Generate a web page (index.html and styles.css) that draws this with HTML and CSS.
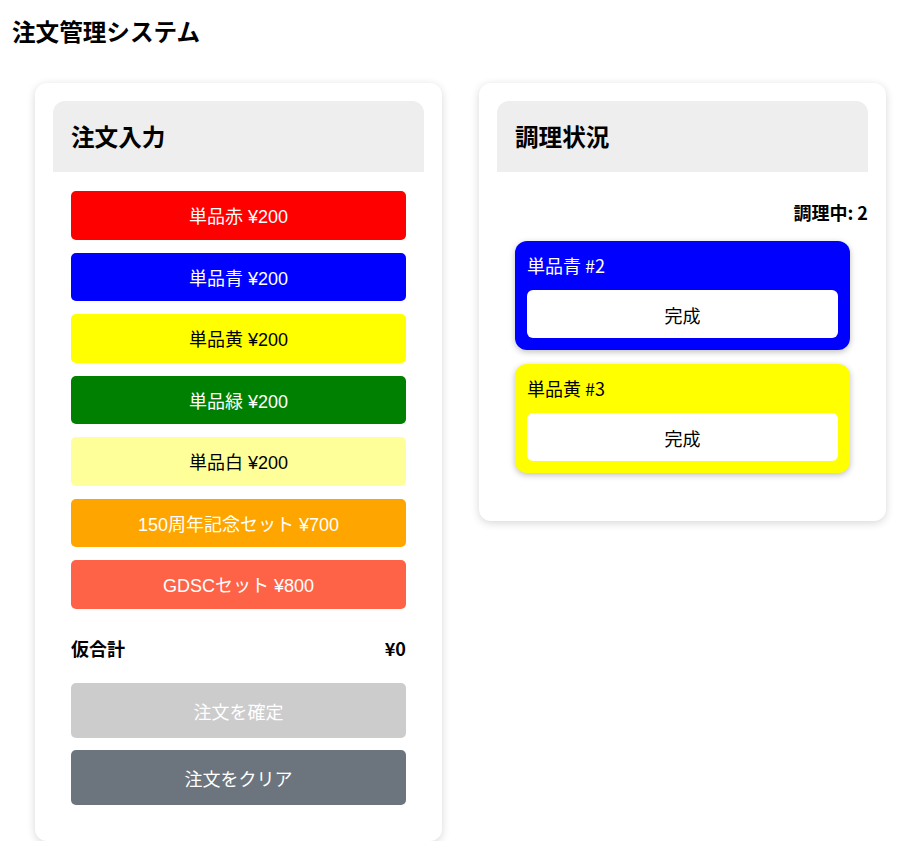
FILE: index.html
```html
<!DOCTYPE html>
<html lang="ja">
<head>
<meta charset="utf-8">
<title>注文管理システム</title>
<link rel="stylesheet" href="styles.css">
</head>
<body>
<h1 class="app-title">注文管理システム</h1>
<main class="layout">
  <section class="panel">
    <div class="panel-head"><h2>注文入力</h2></div>
    <div class="order-body">
      <div class="menu">
        <button class="item red">単品赤 ¥200</button>
        <button class="item blue">単品青 ¥200</button>
        <button class="item yellow">単品黄 ¥200</button>
        <button class="item green">単品緑 ¥200</button>
        <button class="item white">単品白 ¥200</button>
        <button class="item orange">150周年記念セット ¥700</button>
        <button class="item tomato">GDSCセット ¥800</button>
      </div>
      <div class="subtotal"><span>仮合計</span><span>¥0</span></div>
      <div class="actions">
        <button class="action confirm">注文を確定</button>
        <button class="action clear">注文をクリア</button>
      </div>
    </div>
  </section>
  <section class="panel">
    <div class="panel-head"><h2>調理状況</h2></div>
    <div class="count">調理中: 2</div>
    <div class="cook-list">
      <div class="cook blue"><div class="cook-name">単品青 #2</div><button class="done">完成</button></div>
      <div class="cook yellow"><div class="cook-name">単品黄 #3</div><button class="done">完成</button></div>
    </div>
  </section>
</main>
</body>
</html>
```
FILE: styles.css
```css
* { box-sizing: border-box; }
body {
  margin: 0;
  font-family: "Noto Sans CJK JP", "Noto Sans", sans-serif;
  color: #000;
  background: #fff;
}
.app-title {
  margin: 0;
  padding: 13px 12px 0;
  font-size: 23.6px;
  line-height: 36px;
  font-weight: 700;
}
.layout {
  display: flex;
  align-items: flex-start;
  gap: 37px;
  padding: 34px 23px 0 35px;
}
.panel {
  width: 407px;
  padding: 18px;
  background: #fff;
  border-radius: 12px;
  box-shadow: 0 2px 8px rgba(0,0,0,0.16);
}
.panel-head {
  height: 71px;
  display: flex;
  align-items: center;
  padding: 0 18px;
  background: #eeeeee;
  border-radius: 12px 12px 0 0;
}
.panel-head h2 {
  margin: 0;
  font-size: 23.6px;
  font-weight: 700;
  line-height: 1;
}
.order-body {
  padding: 19px 18px 18px;
}
.menu {
  display: flex;
  flex-direction: column;
  gap: 13px;
}
button {
  font-family: "Liberation Sans", "Noto Sans CJK JP", sans-serif;
  border: none;
  cursor: pointer;
}
.item {
  height: 48.5px;
  border-radius: 5px;
  font-size: 18px;
  color: #fff;
}
.item.red { background: #ff0000; }
.item.blue { background: #0000ff; }
.item.yellow { background: #ffff00; color: #000; }
.item.green { background: #008000; }
.item.white { background: #ffff99; color: #000; }
.item.orange { background: #ffa500; }
.item.tomato { background: #ff6347; }
.subtotal {
  display: flex;
  justify-content: space-between;
  margin: 26px 0 21.5px;
  font-size: 18px;
  font-weight: 700;
  line-height: 27px;
}
.actions {
  display: flex;
  flex-direction: column;
  gap: 12px;
}
.action {
  height: 55px;
  border-radius: 5px;
  font-size: 18px;
  color: #fff;
}
.action.confirm { background: #cccccc; }
.action.clear { background: #6c757d; }
.count {
  margin-top: 28px;
  text-align: right;
  font-size: 18px;
  font-weight: 700;
  line-height: 24px;
}
.cook-list {
  display: flex;
  flex-direction: column;
  gap: 14px;
  padding: 17px 18px 30px;
}
.cook {
  padding: 12px;
  border-radius: 12px;
  box-shadow: 0 2px 6px rgba(0,0,0,0.25);
}
.cook.blue { background: #0000ff; color: #fff; }
.cook.yellow { background: #ffff00; color: #000; }
.cook-name {
  font-size: 18px;
  line-height: 24px;
  margin-bottom: 13px;
}
.done {
  display: block;
  width: 100%;
  height: 48px;
  background: #fff;
  color: #000;
  border-radius: 6px;
  font-family: "Noto Sans CJK JP", sans-serif;
  font-size: 18px;
  line-height: 1;
  padding-top: 2px;
}
```
